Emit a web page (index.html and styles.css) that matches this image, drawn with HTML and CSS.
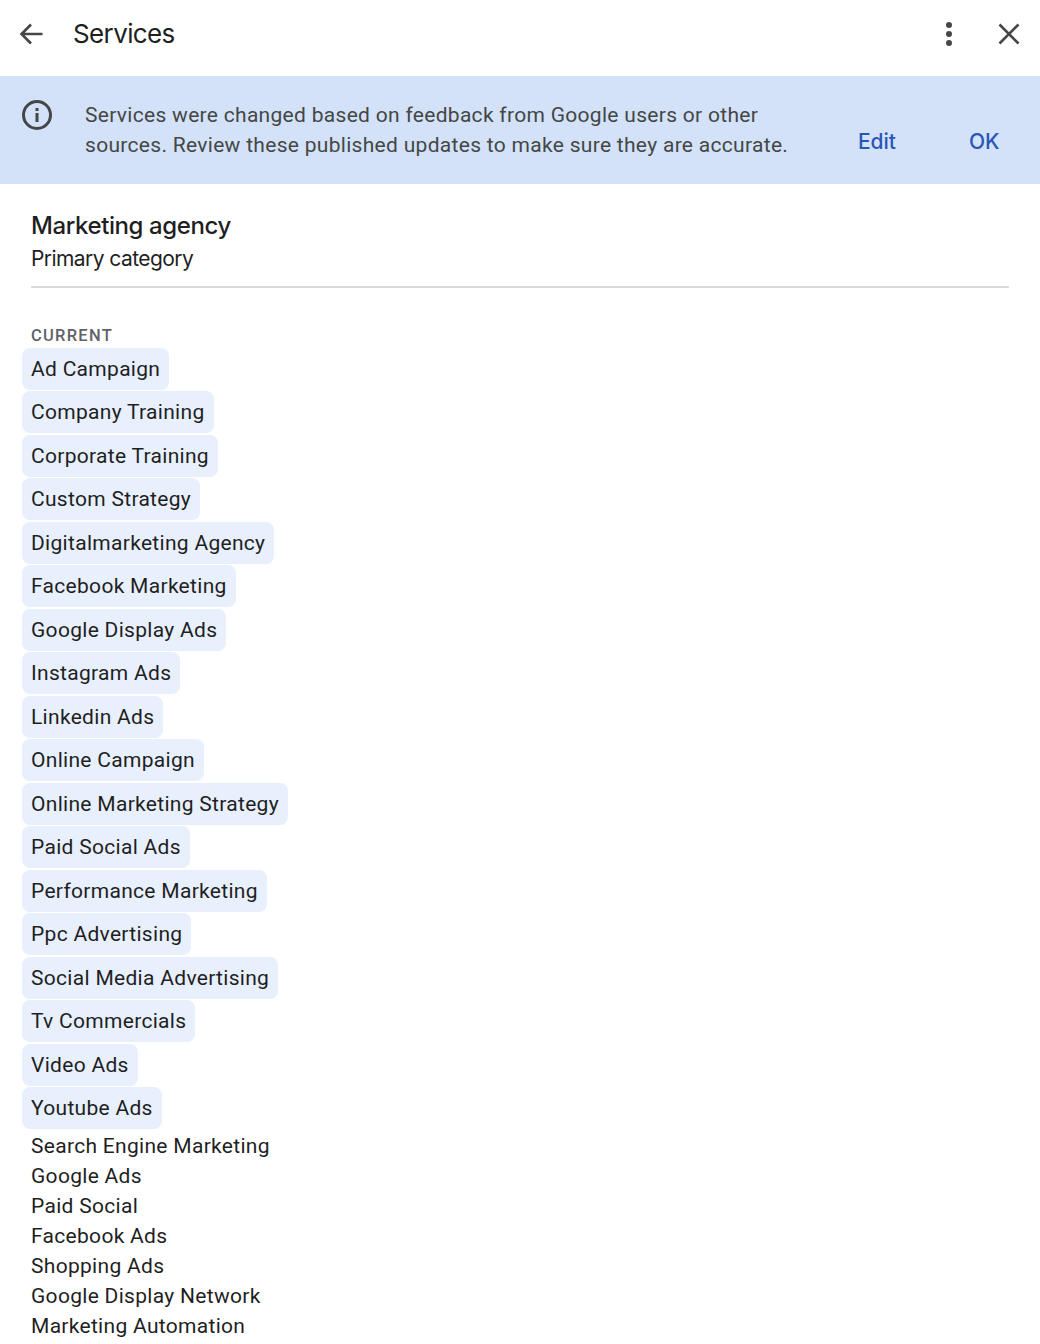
FILE: index.html
```html
<!DOCTYPE html>
<html lang="en">
<head>
<meta charset="utf-8">
<title>Services</title>
<link rel="stylesheet" href="styles.css">
</head>
<body>
<header class="topbar">
  <svg class="icon-back" viewBox="0 0 28 28" width="28" height="28"><path d="M25.500 14H4.500M14 4.500 4.500 14l9.500 9.500" fill="none" stroke="#444746" stroke-width="2.600"/></svg>
  <h1 class="title">Services</h1>
  <svg class="icon-more" viewBox="0 0 8 26" width="8" height="26"><circle cx="4" cy="4" r="3"/><circle cx="4" cy="13" r="3"/><circle cx="4" cy="22" r="3"/></svg>
  <svg class="icon-close" viewBox="0 0 24 24" width="24" height="24"><path d="M2.500 2.500l19 19M21.500 2.500l-19 19" fill="none" stroke="#444746" stroke-width="2.600"/></svg>
</header>
<section class="banner">
  <svg class="icon-info" viewBox="0 0 32 32" width="32" height="32"><circle cx="16" cy="16" r="13.500" fill="none" stroke="#444746" stroke-width="3"/><rect x="14.500" y="14" width="3" height="9" fill="#444746"/><rect x="14.500" y="9" width="3" height="3" fill="#444746"/></svg>
  <p class="banner-text">Services were changed based on feedback from Google users or other<br>sources. Review these published updates to make sure they are accurate.</p>
  <a class="banner-action action-edit">Edit</a>
  <a class="banner-action action-ok">OK</a>
</section>
<main class="content">
  <h2 class="category">Marketing agency</h2>
  <p class="category-sub">Primary category</p>
  <hr class="divider">
  <h3 class="label">CURRENT</h3>
  <ul class="chips">
    <li class="chip">Ad Campaign</li>
    <li class="chip">Company Training</li>
    <li class="chip">Corporate Training</li>
    <li class="chip">Custom Strategy</li>
    <li class="chip">Digitalmarketing Agency</li>
    <li class="chip">Facebook Marketing</li>
    <li class="chip">Google Display Ads</li>
    <li class="chip">Instagram Ads</li>
    <li class="chip">Linkedin Ads</li>
    <li class="chip">Online Campaign</li>
    <li class="chip">Online Marketing Strategy</li>
    <li class="chip">Paid Social Ads</li>
    <li class="chip">Performance Marketing</li>
    <li class="chip">Ppc Advertising</li>
    <li class="chip">Social Media Advertising</li>
    <li class="chip">Tv Commercials</li>
    <li class="chip">Video Ads</li>
    <li class="chip">Youtube Ads</li>
  </ul>
  <ul class="plain">
    <li>Search Engine Marketing</li>
    <li>Google Ads</li>
    <li>Paid Social</li>
    <li>Facebook Ads</li>
    <li>Shopping Ads</li>
    <li>Google Display Network</li>
    <li>Marketing Automation</li>
  </ul>
</main>
</body>
</html>
```
FILE: styles.css
```css
* { box-sizing: border-box; }
html, body { margin: 0; padding: 0; background: #fff; height: 1344px; overflow: hidden; }
body { font-family: Roboto, "Liberation Sans", sans-serif; color: #1f1f1f; }
.topbar { height: 76px; display: flex; align-items: center; padding: 0 19px 8px 17px; }
.icon-back { flex: none; }
.title { margin: 0 0 0 28px; font: 400 26px/36px Inter, Roboto, sans-serif; flex: 1; color: #1f1f1f; letter-spacing: -0.62px; }
.icon-more { fill: #444746; margin-right: 44px; }
.banner { height: 108px; background: #d3e2f8; display: flex; position: relative; padding: 23px 0 0 21px; }
.icon-info { flex: none; }
.banner-text { margin: 1px 0 0 32px; font-size: 21px; line-height: 30px; letter-spacing: 0.3px; color: #444746; }
.banner-action { position: absolute; top: 51px; font: 500 21px/30px Inter, Roboto, sans-serif; color: #2a56b8; letter-spacing: -0.1px; }
.action-edit { left: 858px; }
.action-ok { left: 969px; }
.content { padding: 0 31px; }
.category { margin: 24px 0 0; font: 500 24px/36px Inter, Roboto, sans-serif; color: #1f1f1f; letter-spacing: -0.4px; }
.category-sub { margin: 0; font: 400 21px/30px Inter, Roboto, sans-serif; color: #1f1f1f; letter-spacing: -0.57px; }
.divider { margin: 12px 0 0; border: 0; height: 2px; background: #dadada; }
.label { margin: 36px 0 0; font: 500 16.500px/24px Roboto, sans-serif; letter-spacing: 1.250px; color: #5f6368; }
.chips { list-style: none; margin: 0 0 0 -9px; padding: 0; display: flex; flex-direction: column; align-items: flex-start; gap: 1.470px; }
.chip { height: 42px; line-height: 42px; padding: 0 9px; background: #e8f0fe; border-radius: 8px; font-size: 21px; letter-spacing: 0.3px; color: #1f1f1f; }
.plain { list-style: none; margin: 2px 0 0; padding: 0; font-size: 21px; line-height: 30px; letter-spacing: 0.3px; color: #1f1f1f; }
```
